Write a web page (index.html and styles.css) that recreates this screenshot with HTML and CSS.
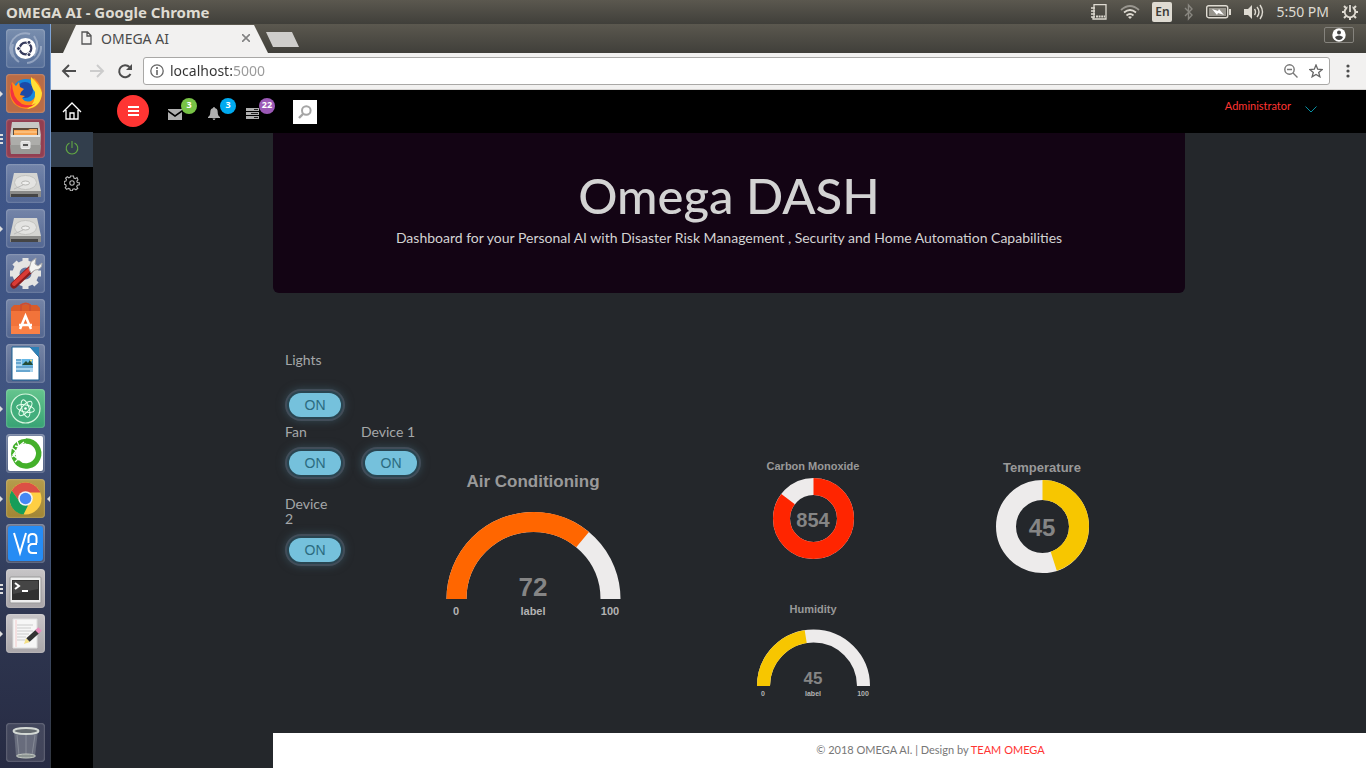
FILE: index.html
```html
<!DOCTYPE html>
<html lang="en">
<head>
<meta charset="utf-8">
<meta name="viewport" content="width=device-width, initial-scale=1">
<title>OMEGA AI</title>
<link rel="stylesheet" href="styles.css">
</head>
<body>
<header class="system-bar">
  <span class="window-title">OMEGA AI - Google Chrome</span>
  <div class="indicators">
    <svg width="18" height="18" viewBox="0 0 18 18" fill="none" stroke="#dfdbd2" stroke-width="1.300"><path d="M4 4V1.700h12V16H3v-2M1 5h4M1 8h4M1 11h4M1 14h4M4 4v10"/><path d="M6 13.500h9" stroke-width="2" stroke-dasharray="2 .6"/></svg>
    <svg width="20" height="16" viewBox="0 0 20 16" fill="none" stroke="#dfdbd2" stroke-width="1.700"><path d="M1 6Q10-2 19 6" stroke="#99968f"/><path d="M4 8.500q6-5 12 0M6.500 11.500q3.500-3 7 0"/><path d="M8 13l2 2 2-2q-2-1.500-4 0z" fill="#dfdbd2" stroke="none"/></svg>
    <span class="language">En</span>
    <svg width="10" height="18" viewBox="0 0 10 18" fill="none" stroke="#898780" stroke-width="1.400"><path d="M1 5l7 7-3.500 4V2L8 6l-7 7"/></svg>
    <svg width="25" height="14" viewBox="0 0 25 14"><rect x=".7" y=".7" width="21" height="12" rx="2" fill="none" stroke="#dfdbd2" stroke-width="1.400"/><path d="M23 4h2v6h-2z" fill="#dfdbd2"/><path d="M3 3h17v8H3z" fill="#98958d"/><path d="M6 4l6 2 1-2 5 6-6-2-1 2z" fill="#fff"/></svg>
    <svg width="21" height="18" viewBox="0 0 21 18"><path d="M1 6h4l4-4v14l-4-4H1z" fill="#dfdbd2"/><path d="M11.500 6q2 3 0 6M14 4q4 5 0 10M17 2q5 7 0 14" fill="none" stroke="#dfdbd2" stroke-width="1.400"/></svg>
    <time class="clock">5:50 PM</time>
    <svg width="18" height="18" viewBox="0 0 18 18" fill="none" stroke="#dfdbd2"><circle cx="9" cy="9" r="5.300" stroke-width="1.800"/><path d="M9 14v3M1 9h3M14 9h3M3 3l2 2M13 13l2 2M3 15l2-2M13 5l2-2" stroke-width="2"/><path d="M9 1v8" stroke="#4b4a44" stroke-width="5"/><path d="M9 2v7" stroke-width="1.800"/></svg>
  </div>
</header>
<div class="desktop">
  <nav class="launcher" aria-label="Launcher">
    <button class="tile" aria-label="Search"><svg viewBox="0 0 39 39"><g fill="none" stroke="#b5c1d6" opacity=".6"><path d="M7 28A15 15 0 0 1 24 5M13 33a15 15 0 0 1-6-18M21 34A16 16 0 0 0 35 17M28 7q7 10 0 20" stroke-width="2"/></g><circle cx="19.500" cy="19.500" r="10.500" fill="#fff"/><circle cx="19.500" cy="19.500" r="5.800" fill="none" stroke="#363b5d" stroke-width="2.200"/><g fill="#363b5d" stroke="#fff"><circle cx="12.500" cy="19.500" r="2"/><circle cx="23" cy="13.400" r="2"/><circle cx="23" cy="25.600" r="2"/></g></svg></button>
    <button class="tile copper" aria-label="Firefox"><span class="pip"></span><svg viewBox="0 0 39 39"><circle cx="20" cy="19" r="14" fill="#1688dd"/><circle cx="19" cy="16" r="8" fill="#1b4aa8"/><path d="M6 8l4 4 3-4 1 5 4 2-3 3-1 3 5 1-3 2q3 5 9 3 6-3 4-12l-3-5q-1-4 2-6 8 7 8 16Q34 35 20 35 6 33 4 21 3 14 6 8z" fill="#ff8a16"/><path d="M25 3q9 8 11 16-1 14-15 16 9-6 8-17-5-6-4-15z" fill="#ffdf35"/><path d="M6 8q0 16 10 22 9 3 14-1Q22 37 11 31 1 22 6 8z" fill="#f4333f"/></svg></button>
    <button class="tile wine" aria-label="Files"><span class="pip many"></span><svg viewBox="0 0 39 39"><path d="M6 3h27l2 14H4z" fill="#c8c8c5"/><path d="M7 9h25v8H7z" fill="#5d4939"/><path d="M8 11h14l2-1h7v6H8z" fill="#f7a452"/><path d="M8 13h23" stroke="#ffd6a0"/><path d="M4 16h31l-1 19H5z" fill="#adadaa"/><path d="M4 26h31l-1 9H5z" fill="#999996"/><path d="M5 17h29" stroke="#e5e5e3" stroke-width="2"/><rect x="15" y="22.500" width="9" height="7" rx="1" fill="#ddd" stroke="#eee"/><path d="M17 25h5v2h-5z" fill="#555"/></svg></button>
    <button class="tile" aria-label="Disk"><svg viewBox="0 0 39 39"><use href="#disk"/></svg></button>
    <button class="tile" aria-label="Second disk"><span class="pip"></span><svg viewBox="0 0 39 39"><g id="disk"><path d="M8 9h23l4 18H4z" fill="#d5d5d2"/><path d="M4 27h31v6H4z" fill="#8b8b89"/><path d="M5 30h27v3H5z" fill="#454545"/><ellipse cx="19.500" cy="18.500" rx="11" ry="7" fill="#e3e3e1" stroke="#c3c3c0"/><ellipse cx="19.500" cy="19" rx="4" ry="2" fill="#f0f0ef" stroke="#b5b5b2"/><path d="M8 25l9-4" stroke="#bbb"/></g></svg></button>
    <button class="tile" aria-label="Settings"><svg viewBox="0 0 39 39"><circle cx="19.500" cy="19.500" r="9.500" fill="none" stroke="#e5e5e3" stroke-width="7"/><path d="M19.500 4v5M19.500 30v5M4 19.500h5M30 19.500h5M8.500 8.500l3.500 3.500M27 27l3.500 3.500M8.500 30.500L12 27" stroke="#e5e5e3" stroke-width="6"/><path d="M8 31l17-16" stroke="#871d1d" stroke-width="7" stroke-linecap="round"/><path d="M8 30l17-16" stroke="#d93b36" stroke-width="4" stroke-linecap="round"/><path d="M23 15l2-7 5-4-1 6 3 2 4-3q0 7-7 7l-4 3z" fill="#f4f4f2" stroke="#aaa"/></svg></button>
    <button class="tile" aria-label="Software"><svg viewBox="0 0 39 39"><path d="M15 12V6q5-3 9 0v6" fill="none" stroke="#d75b38" stroke-width="2"/><path d="M5 9l3-3h23l3 3v4H5z" fill="#d95b29"/><path d="M5 12h29v23H5z" fill="#f2733a"/><path d="M5 27h29v8H5z" fill="#fa8045"/><path d="M15 12V6q5-3 9 0v6" fill="none" stroke="#c94e34" stroke-width="1.500"/><path d="M14 30l5.500-13L25 30M13 26h13" fill="none" stroke="#fff" stroke-width="2.500"/></svg></button>
    <button class="tile" aria-label="Writer"><svg viewBox="0 0 39 39"><path d="M6 3h18l9 10v23H6z" fill="#fff" stroke="#165f92"/><path d="M24 3h9v10z" fill="#2e81b8"/><path d="M10 15h17v13H10z" fill="#a9d4ed"/><path d="M10 16h5M10 19h5M10 23h17M10 27h14" stroke="#2479b1"/><path d="M16 15h11v7H16z" fill="#65b7e5"/><path d="M16 21l4-4 2 2 2-3 3 5z" fill="#244c37"/><circle cx="25" cy="16.500" r="1" fill="#ffe169"/></svg></button>
    <button class="tile green" aria-label="Atom"><span class="pip"></span><svg viewBox="0 0 39 39"><circle cx="19.500" cy="19.500" r="14.500" fill="#42ae7c" stroke="#d8f6df" stroke-width="1.200"/><g fill="none" stroke="#e4ffec" stroke-width="1"><ellipse cx="19.500" cy="19.500" rx="9" ry="3.600" transform="rotate(12 19.500 19.500)"/><ellipse cx="19.500" cy="19.500" rx="9" ry="3.600" transform="rotate(72 19.500 19.500)"/><ellipse cx="19.500" cy="19.500" rx="9" ry="3.600" transform="rotate(132 19.500 19.500)"/></g><circle cx="19.500" cy="19.500" r="1.300" fill="#fff"/></svg></button>
    <button class="tile" aria-label="Anaconda"><svg viewBox="0 0 39 39"><rect x="2" y="2" width="35" height="35" rx="2" fill="#fff"/><path d="M20 7a12.500 12.500 0 1 1-9 21" fill="none" stroke="#43b02a" stroke-width="5.500"/><path d="M13 30a12.500 12.500 0 0 1 7-23" fill="none" stroke="#43b02a" stroke-width="4.500"/><path d="M5 13l5 4-3 4 5 4-3 3M11 7l2 5 5-4M6 23l5-4 1-5M9 12l5 1" stroke="#fff" fill="none" stroke-width="1.300"/></svg></button>
    <button class="tile gold" aria-label="Chrome"><span class="pip"></span><span class="pip active"></span><svg viewBox="0 0 39 39"><circle cx="19.500" cy="19.500" r="16" fill="#ffcf43"/><path d="M5.700 11.500a16 16 0 0 1 27.600 0q1 1 .8 2H19.500l-6 9z" fill="#dc5045"/><path d="M5.700 11.500l7.800 11 8.500 4-4.500 9A16 16 0 0 1 5.700 11.500z" fill="#169d59"/><circle cx="19.500" cy="19.500" r="7.300" fill="#f4f4f4"/><circle cx="19.500" cy="19.500" r="5.800" fill="#4688f4"/></svg></button>
    <button class="tile" aria-label="VNC Viewer"><svg viewBox="0 0 39 39"><rect x="2" y="2" width="35" height="35" rx="3" fill="#268cf4"/><path d="M8 9l6 20 6-20M22.500 19v-5q0-4 4-4t4 4v5M31 20h-4.500q-4 0-4 4.500t4 4.500H31" fill="none" stroke="#fff" stroke-width="2"/></svg></button>
    <button class="tile silver" aria-label="Terminal"><span class="pip many"></span><svg viewBox="0 0 39 39"><rect x="4" y="8" width="31" height="26" rx="1" fill="#eee" stroke="#999"/><path d="M6 11h27v20H6z" fill="#303030"/><path d="M7 12h25v8L7 25z" fill="#454545"/><path d="M9 14l4 3-4 3M16 22h6" fill="none" stroke="#fff" stroke-width="2"/></svg></button>
    <button class="tile silver" aria-label="Text editor"><span class="pip"></span><svg viewBox="0 0 39 39"><path d="M7 5h24v29H7z" fill="#f6f6f6" stroke="#ddd"/><path d="M11 11h16M11 14h14M11 17h16M11 20h12M11 23h9M11 26h8" stroke="#ccc"/><path d="M10 6v27" stroke="#f3caca"/><path d="M18 30l2-6 4 4z" fill="#f3df86"/><path d="M22 26l10-9" stroke="#333" stroke-width="5"/><path d="M31 18l3-3" stroke="#e78dbc" stroke-width="5"/></svg></button>
    <button class="tile trash" aria-label="Trash"><svg viewBox="0 0 39 39"><path d="M8 8h24l-3 25q-9 4-19 0z" fill="#aeb5ba" opacity=".35"/><path d="M11 12l2 20M20 12v22M29 12l-3 20" stroke="#dfe5e5" opacity=".25"/><ellipse cx="20" cy="8" rx="12.500" ry="3" fill="#656b70" stroke="#d4d9d5" stroke-width="2"/><ellipse cx="20" cy="33" rx="9.500" ry="2" fill="#8c9492" stroke="#c5cbc4"/></svg></button>
  </nav>
  <div class="browser">
    <div class="tab-strip">
      <div class="tab">
        <svg width="11" height="14" viewBox="0 0 11 14" fill="none" stroke="#555" stroke-width="1.300"><path d="M1 1h5.500L10 4.500V13H1zM6 1v4h4"/></svg>
        <span class="tab-title">OMEGA AI</span>
        <button class="plain" aria-label="Close tab"><svg width="8" height="8" viewBox="0 0 8 8" stroke="#828282" stroke-width="1.600"><path d="M0 0l8 8M8 0L0 8"/></svg></button>
      </div>
      <button class="new-tab" aria-label="New tab"></button>
      <button class="profile" aria-label="Profile"><svg width="14" height="14" viewBox="0 0 14 14"><circle cx="7" cy="7" r="6.700" fill="#fff"/><circle cx="7" cy="4.500" r="2" fill="#444"/><path d="M3 9q4-3 8 0-1 3-4 3T3 9z" fill="#444"/></svg></button>
    </div>
    <div class="toolbar">
      <button class="plain" aria-label="Back"><svg width="16" height="14" viewBox="0 0 16 14" fill="none" stroke="#4d4d4d" stroke-width="1.900"><path d="M15 7H2M8 1L2 7l6 6"/></svg></button>
      <button class="plain" aria-label="Forward"><svg width="16" height="14" viewBox="0 0 16 14" fill="none" stroke="#ccc" stroke-width="1.900"><path d="M1 7h13M8 1l6 6-6 6"/></svg></button>
      <button class="plain" aria-label="Reload"><svg width="16" height="16" viewBox="0 0 16 16" fill="none" stroke="#4d4d4d" stroke-width="2"><path d="M13.500 11A6 6 0 1 1 12.500 4"/><path d="M15 1v6H9z" fill="#4d4d4d" stroke="none"/></svg></button>
      <div class="address">
        <svg width="14" height="14" viewBox="0 0 14 14"><circle cx="7" cy="7" r="6.200" fill="none" stroke="#666" stroke-width="1.300"/><path d="M7 6v5M7 3v2" stroke="#666" stroke-width="1.600"/></svg>
        <input class="url" type="text" value="localhost:5000" aria-label="Address">
        <button class="plain" aria-label="Zoom"><svg width="14" height="14" viewBox="0 0 14 14" fill="none" stroke="#777" stroke-width="1.400"><circle cx="5.500" cy="5.500" r="4.700"/><path d="M9 9l4.500 4.500M3 5.500h5"/></svg></button>
        <button class="plain" aria-label="Bookmark"><svg width="14" height="14" viewBox="0 0 14 14" fill="none" stroke="#666" stroke-width="1.300"><path d="M7 1l1.700 4.200 4.500.3-3.500 2.900 1.200 4.400L7 10.400l-3.900 2.400 1.200-4.400L.8 5.500l4.500-.3z"/></svg></button>
      </div>
      <button class="plain" aria-label="Menu"><svg width="4" height="14" viewBox="0 0 4 14" fill="#4d4d4d"><circle cx="2" cy="2" r="1.600"/><circle cx="2" cy="7" r="1.600"/><circle cx="2" cy="12" r="1.600"/></svg></button>
    </div>
    <div class="page">
      <nav class="side-nav" aria-label="Dashboard">
        <a href="#home" class="side-link home" aria-label="Home"><svg width="20" height="20" viewBox="0 0 20 20" fill="none" stroke="#fff" stroke-width="1.300"><path d="M1 11l9-9 9 9M4 9v9h12V9M8 18v-6h4v6"/></svg></a>
        <a href="#power" class="side-link current" aria-label="Power"><svg width="14" height="14" viewBox="0 0 14 14" fill="none" stroke="#62a744" stroke-width="1.100"><path d="M4.500 2a5.800 5.800 0 1 0 5 0M7 0v7"/></svg></a>
        <a href="#settings" class="side-link" aria-label="Settings"><svg width="16" height="16" viewBox="0 0 16 16" fill="none" stroke="#b8b8b8" stroke-width="1.100"><path d="M6.500 1h3l.4 2 1.500.6L13 2.500l1 2.300-1.200 1.300.5 1.400 2 .2v2l-2 .5-.6 1.500 1.100 1.600-1.900 1.500-1.600-1-1.500.4-.4 1.500h-2l-.5-1.700-1.500-.6-1.700 1-1.500-1.700 1-1.500-.5-1.500-1.500-.5V6.500l1.700-.4.6-1.500-.9-1.500 1.700-1.300 1.500 1 1.300-.4z"/><circle cx="8" cy="8" r="2.200"/></svg></a>
      </nav>
      <div class="content">
        <header class="app-bar">
          <button class="menu-button" aria-label="Toggle menu"><svg width="11" height="10" viewBox="0 0 11 10" stroke="#fff" stroke-width="2"><path d="M0 1h11M0 5h11M0 9h11"/></svg></button>
          <div class="notices">
            <button class="notice" aria-label="Messages, 3 new"><svg width="14" height="12" viewBox="0 0 14 12" fill="#b0b0b0"><path d="M0 1h14v1L7 7 0 2zM0 4l7 5 7-5v8H0z"/></svg><span class="badge lime">3</span></button>
            <button class="notice" aria-label="Alerts, 3 new"><svg width="14" height="13" viewBox="-1 0 14 13" fill="#b0b0b0"><path d="M5.300 0h1.400v1q3 .5 3 4 0 4 2.300 5v1H0v-1q2.300-1 2.300-5 0-3.500 3-4zM4.500 11.500h3Q7 13 6 13t-1.500-1.500z"/></svg><span class="badge sky">3</span></button>
            <button class="notice" aria-label="Tasks, 22 new"><svg width="14" height="11" viewBox="0 0 14 11"><path d="M0 0h13v3H0zM0 4h13v3H0zM0 8h13v3H0z" fill="#b0b0b0"/><path d="M8 1.500h4M5 5.500h7M8 9.500h4" stroke="#222"/></svg><span class="badge violet">22</span></button>
          </div>
          <button class="search" aria-label="Search"><svg width="14" height="14" viewBox="0 0 14 14" fill="none" stroke="#a5a5a5" stroke-width="2"><circle cx="8.300" cy="5.500" r="4.300"/><path d="M5 9l-4 4" stroke-width="2.400"/></svg></button>
          <button class="account">Administrator <svg width="12" height="7" viewBox="0 0 12 7" fill="none" stroke="#0791a5"><path d="M.5.500L6 6 11.500.5"/></svg></button>
        </header>
        <main class="dashboard">
          <section class="hero">
            <h1>Omega DASH</h1>
            <p>Dashboard for your Personal AI with Disaster Risk Management , Security and Home Automation Capabilities</p>
          </section>
          <section class="panels">
            <div class="devices">
              <div class="device lights"><label for="lights">Lights</label><button id="lights" class="switch">ON</button></div>
              <div class="device"><label for="fan">Fan</label><button id="fan" class="switch">ON</button></div>
              <div class="device"><label for="device1">Device 1</label><button id="device1" class="switch">ON</button></div>
              <div class="device last"><label for="device2">Device 2</label><button id="device2" class="switch">ON</button></div>
            </div>
            <div class="column cooling">
              <svg class="gauge" width="192" height="150" viewBox="0 0 192 150" role="img" aria-label="Air Conditioning 72">
                <text class="name" x="96" y="17" font-size="17">Air Conditioning</text>
                <path d="M19.500 129a77 77 0 0 1 154 0" stroke="#edebeb" stroke-width="20"/>
                <path d="M19.500 129a77 77 0 0 1 154 0" stroke="#ff6600" stroke-width="20" pathLength="100" stroke-dasharray="72 100"/>
                <text class="value" x="96" y="126" font-size="26">72</text>
                <g class="scale" font-size="11"><text x="19" y="145">0</text><text x="96" y="145">label</text><text x="173" y="145">100</text></g>
              </svg>
            </div>
            <div class="column air">
              <svg class="gauge" width="172" height="110" viewBox="0 0 172 110" role="img" aria-label="Carbon Monoxide 854">
                <text class="name" x="86" y="13" font-size="11">Carbon Monoxide</text>
                <circle cx="86.500" cy="61.500" r="32" stroke="#edebeb" stroke-width="17"/>
                <circle cx="86.500" cy="61.500" r="32" stroke="#ff2500" stroke-width="17" pathLength="100" stroke-dasharray="85.400 100" transform="rotate(-90 86.500 61.500)"/>
                <text class="value" x="86" y="70" font-size="20">854</text>
              </svg>
              <svg class="gauge" width="172" height="110" viewBox="0 0 172 110" role="img" aria-label="Humidity 45">
                <text class="name" x="86" y="16" font-size="11">Humidity</text>
                <path d="M36.500 89a50 50 0 0 1 100 0" stroke="#edebeb" stroke-width="13"/>
                <path d="M36.500 89a50 50 0 0 1 100 0" stroke="#f7c600" stroke-width="13" pathLength="100" stroke-dasharray="45 100"/>
                <text class="value" x="86" y="87" font-size="17">45</text>
                <g class="scale" font-size="7"><text x="36" y="99">0</text><text x="86" y="99">label</text><text x="136" y="99">100</text></g>
              </svg>
            </div>
            <div class="column heat">
              <svg class="gauge" width="172" height="120" viewBox="0 0 172 120" role="img" aria-label="Temperature 45">
                <text class="name" x="86" y="15" font-size="13">Temperature</text>
                <circle cx="86.500" cy="69.500" r="36.500" stroke="#edebeb" stroke-width="20"/>
                <circle cx="86.500" cy="69.500" r="36.500" stroke="#f7c600" stroke-width="20" pathLength="100" stroke-dasharray="45 100" transform="rotate(-90 86.500 69.500)"/>
                <text class="value" x="86" y="79" font-size="24">45</text>
              </svg>
            </div>
          </section>
        </main>
        <footer class="credits">© 2018 OMEGA AI. | Design by <a href="#team">TEAM OMEGA</a></footer>
      </div>
    </div>
  </div>
</div>
</body>
</html>
```

FILE: styles.css
```css
* { box-sizing: border-box; }
body {
  margin: 0;
  min-height: 100vh;
  display: flex;
  flex-direction: column;
  font-family: Lato, "Liberation Sans", sans-serif;
  background: #24272b;
}
button { margin: 0; padding: 0; border: 0; background: none; font-family: inherit; cursor: pointer; }
svg { display: block; flex: none; }

.system-bar {
  height: 24px;
  padding: 0 7px 0 6px;
  display: flex;
  align-items: center;
  justify-content: space-between;
  background: linear-gradient(#5b584f, #403f3a);
  color: #dfdbd2;
  font: 14px/22px "Noto Sans", sans-serif;
}
.window-title { font-size: 15px; font-weight: 700; }
.indicators { display: flex; align-items: center; gap: 12px; }
.language {
  width: 20px;
  height: 20px;
  border-radius: 2px;
  background: #dfdbd2;
  color: #3c3b37;
  font-size: 12px;
  font-weight: 600;
  line-height: 20px;
  text-align: center;
}

.desktop { flex: 1; display: flex; }
.launcher {
  width: 51px;
  padding: 5px 0 6px 6px;
  display: flex;
  flex-direction: column;
  gap: 6px;
  border-right: 1px solid #5677a8;
  border-image: linear-gradient(#7fa5d8, #48608c 60%, #30353f) 1;
  background: linear-gradient(#46638f, #3e568a 15%, #41547f 55%, #2e3650 80%, #272b43);
}
.tile {
  position: relative;
  width: 39px;
  height: 39px;
  border-radius: 4px;
  background: linear-gradient(rgba(255, 255, 255, .28), rgba(255, 255, 255, .1));
  box-shadow: inset 0 0 2px rgba(255, 255, 255, .5);
}
.tile svg { width: 39px; height: 39px; }
.copper { background: #b96c46; }
.wine { background: #923e51; }
.green { background: linear-gradient(#66c58e, #37a274); }
.gold { background: linear-gradient(#b59c4c, #a28635); }
.silver { background: linear-gradient(#c7c5c7, #a9a6a9); }
.trash { margin-top: auto; background: rgba(255, 255, 255, .12); }
.pip {
  position: absolute;
  left: -6px;
  top: 17px;
  border: 3px solid transparent;
  border-left-color: #ddd;
  border-right-width: 0;
}
.pip.many {
  top: 15px;
  width: 3px;
  height: 10px;
  border: 0;
  background: repeating-linear-gradient(#ddd 0 2px, transparent 2px 4px);
}
.pip.active {
  left: auto;
  right: -5px;
  border-right: 3px solid #ddd;
  border-left-width: 0;
}

.browser { flex: 1; min-width: 0; display: flex; flex-direction: column; }
.tab-strip {
  height: 29px;
  padding: 1px 12px 0 12px;
  display: flex;
  align-items: flex-start;
  background: linear-gradient(#5b584f, #403f3a);
}
.tab {
  width: 205px;
  height: 28px;
  padding: 0 18px 2px 18px;
  display: flex;
  align-items: center;
  gap: 9px;
  background: #f2f1f0;
  clip-path: polygon(13px 0, 191px 0, 100% 100%, 0 100%);
}
.tab-title { flex: 1; color: #4b4b4b; font: 14px "Noto Sans", sans-serif; }
.new-tab {
  width: 33px;
  height: 15px;
  margin: 7px auto 0 -2px;
  background: #cecdcb;
  clip-path: polygon(0 0, 26px 0, 100% 100%, 7px 100%);
}
.profile {
  width: 30px;
  height: 16px;
  margin-top: 2px;
  display: grid;
  place-items: center;
  border: 1px solid #85837d;
  border-radius: 2px;
}
.toolbar {
  height: 37px;
  padding: 0 16px 0 10px;
  display: flex;
  align-items: center;
  gap: 12px;
  background: #f2f1f0;
  border-bottom: 1px solid #d4d2d0;
}
.toolbar > .plain:last-child { margin-left: 4px; }
.address {
  flex: 1;
  height: 28px;
  margin-left: -2px;
  padding: 0 6px;
  display: flex;
  align-items: center;
  gap: 6px;
  border: 1px solid #a9a8a6;
  border-radius: 3px;
  background: #fff;
}
.address .plain { margin-left: 5px; }
.url {
  flex: 1;
  min-width: 0;
  padding: 0;
  border: 0;
  outline: 0;
  color: #333;
  font: 14px/20px "Noto Sans", sans-serif;
  background: linear-gradient(90deg, #333 62px, #999 62px);
  -webkit-background-clip: text;
  background-clip: text;
  -webkit-text-fill-color: transparent;
}

.page { flex: 1; display: flex; background: #24272b; }
.side-nav { width: 42px; background: #000; }
.side-link { height: 35px; padding-bottom: 3px; display: grid; place-items: center; }
.home { height: 42px; padding: 0; }
.current { background: #323e4c; }
.content { flex: 1; min-width: 0; display: flex; flex-direction: column; }
.app-bar {
  height: 43px;
  padding: 0 49px 0 24px;
  display: flex;
  align-items: center;
  background: #000;
}
.menu-button {
  width: 32px;
  height: 32px;
  margin-bottom: 2px;
  display: grid;
  place-items: center;
  border-radius: 50%;
  background: #ff3533;
}
.notices { display: flex; margin: 0 21px 0 17px; gap: 11px; }
.notice {
  position: relative;
  width: 28px;
  height: 30px;
  padding: 4px 0 0 2px;
  display: flex;
  align-items: center;
}
.badge {
  position: absolute;
  top: 1px;
  left: 15px;
  width: 16px;
  height: 16px;
  border-radius: 50%;
  color: #fff;
  font: 700 9px/14px "Open Sans", sans-serif;
  text-align: center;
}
.lime { background: #78c346; }
.sky { background: #00aaf0; }
.violet { background: #9b59b6; }
.search {
  width: 24px;
  height: 24px;
  display: grid;
  place-items: center;
  background: #fff;
}
.account {
  margin: 0 0 12px auto;
  display: flex;
  align-items: center;
  gap: 14px;
  color: #ff3533;
  font-size: 11px;
}
.account svg { margin-top: 8px; }

.dashboard { flex: 1; padding: 0 181px 0 180px; }
.hero {
  min-height: 160px;
  padding: 32px 24px;
  border-radius: 0 0 6px 6px;
  background: #130414;
  color: #d3d3d3;
  text-align: center;
}
.hero h1 { margin: 0; font-family: "Lato Medium", Lato, sans-serif; font-size: 49px; font-weight: 500; line-height: 60px; }
.hero p { margin: 3px 0 0; font-size: 14px; line-height: 20px; }
.panels {
  padding-top: 59px;
  display: grid;
  grid-template-columns: 164px 290fr 172fr 286fr;
  align-items: start;
}
.devices {
  padding-left: 12px;
  display: grid;
  grid-template-columns: 76px 76px;
}
.device {
  display: flex;
  flex-direction: column;
  align-items: flex-start;
  gap: 12px;
  color: #a5a7a9;
  font-size: 14px;
  line-height: 15px;
}
.device label { max-width: 60px; }
.device .switch { margin-left: 4px; }
.lights { grid-column: 1 / -1; gap: 26px; margin-bottom: 7px; }
.last { margin-top: 21px; }
.last label { width: 50px; }
.switch {
  width: 52px;
  height: 24px;
  border-radius: 12px;
  background: #75c1dc;
  color: #2b6b80;
  font: 14px/22px "Liberation Sans", sans-serif;
  box-shadow: 0 0 0 2px #294551, 0 0 0 4px #424d59, 0 0 8px 4px #344953;
}
.column { display: flex; flex-direction: column; }
.cooling { padding-top: 118px; }
.air { padding-top: 105px; gap: 30px; align-items: center; }
.heat { padding-top: 105px; align-items: center; }
.gauge { fill: none; font-family: "Liberation Sans", sans-serif; font-weight: 700; text-anchor: middle; }
.name { fill: #999; }
.value { fill: #858585; }
.scale { fill: #b3b3b3; }

.credits {
  min-height: 35px;
  padding: 0 0 0 222px;
  margin-left: 180px;
  background: #fff;
  color: #777;
  font-size: 11px;
  line-height: 34px;
  text-align: center;
}
.credits a { color: #ff3533; text-decoration: none; }
```
